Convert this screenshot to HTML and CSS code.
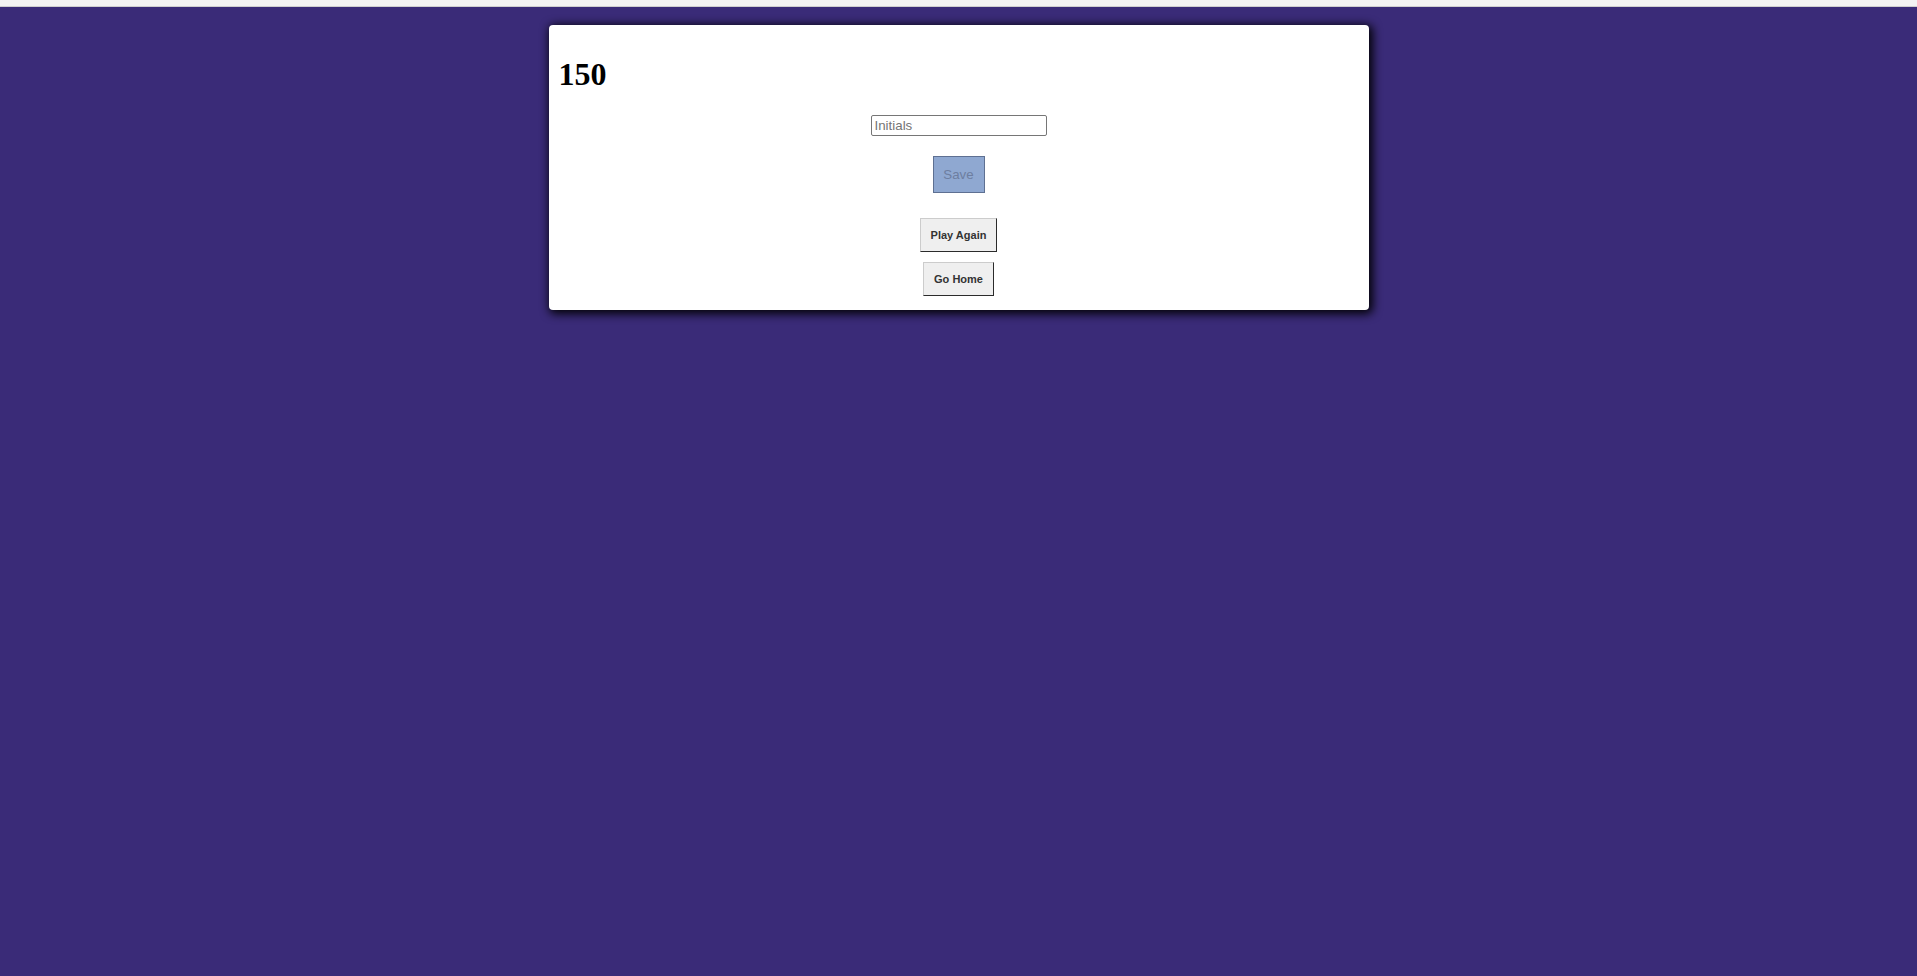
FILE: index.html
```html
<!DOCTYPE html>
<html>
<head>
<meta charset="utf-8">
<title>Quiz</title>
<link rel="stylesheet" href="styles.css">
</head>
<body>
<div class="topbar"></div>
<main class="page">
  <section class="card">
    <h1 class="score">150</h1>
    <div class="form">
      <input class="initials" type="text" placeholder="Initials">
      <button class="save" disabled>Save</button>
      <button class="action play">Play Again</button>
      <button class="action home">Go Home</button>
    </div>
  </section>
</main>
</body>
</html>
```

FILE: styles.css
```css
html, body {
  margin: 0;
  padding: 0;
  height: 100%;
}
body {
  background: #3a2b78;
  font-family: "Liberation Serif", "Times New Roman", serif;
  display: flex;
  flex-direction: column;
}
.topbar {
  height: 6px;
  background: #f3f3f3;
  border-bottom: 1px solid #cfcfcf;
  flex: none;
}
.page {
  display: flex;
  justify-content: center;
  padding-top: 18px;
}
.card {
  width: 820px;
  box-sizing: border-box;
  background: #ffffff;
  border-radius: 4px;
  box-shadow: 2px 2px 10px 2px rgba(0, 0, 0, 0.95);
  padding: 10px 10px 14px;
}
.score {
  font-family: "Liberation Serif", "Times New Roman", serif;
  font-weight: bold;
  font-size: 32px;
  margin: 21px 0 22px;
  color: #000;
}
.form {
  display: flex;
  flex-direction: column;
  align-items: center;
}
.initials {
  box-sizing: border-box;
  width: 176px;
  height: 21px;
  border: 1px solid #767676;
  border-radius: 2px;
  padding: 1px 3px;
  font-family: "Liberation Sans", Arial, sans-serif;
  font-size: 13.33px;
  color: #000;
  outline: none;
}
.initials::placeholder {
  color: #757575;
}
.save {
  margin-top: 20px;
  box-sizing: border-box;
  width: 52px;
  height: 37px;
  padding: 0;
  background: #8fa8d1;
  border: 1px solid #5e7092;
  border-radius: 0;
  color: #6d7ea0;
  font-family: "Liberation Sans", Arial, sans-serif;
  font-size: 13.33px;
}
.action {
  box-sizing: border-box;
  height: 34px;
  padding: 0 10px;
  white-space: nowrap;
  background: #efefef;
  border-style: solid;
  border-width: 1px;
  border-color: #cccccc #2b2b2b #2b2b2b #cccccc;
  border-radius: 0;
  color: #333333;
  font-family: "Liberation Sans", Arial, sans-serif;
  font-weight: bold;
  font-size: 11px;
}
.play {
  margin-top: 25px;
}
.home {
  margin-top: 10px;
}
```
